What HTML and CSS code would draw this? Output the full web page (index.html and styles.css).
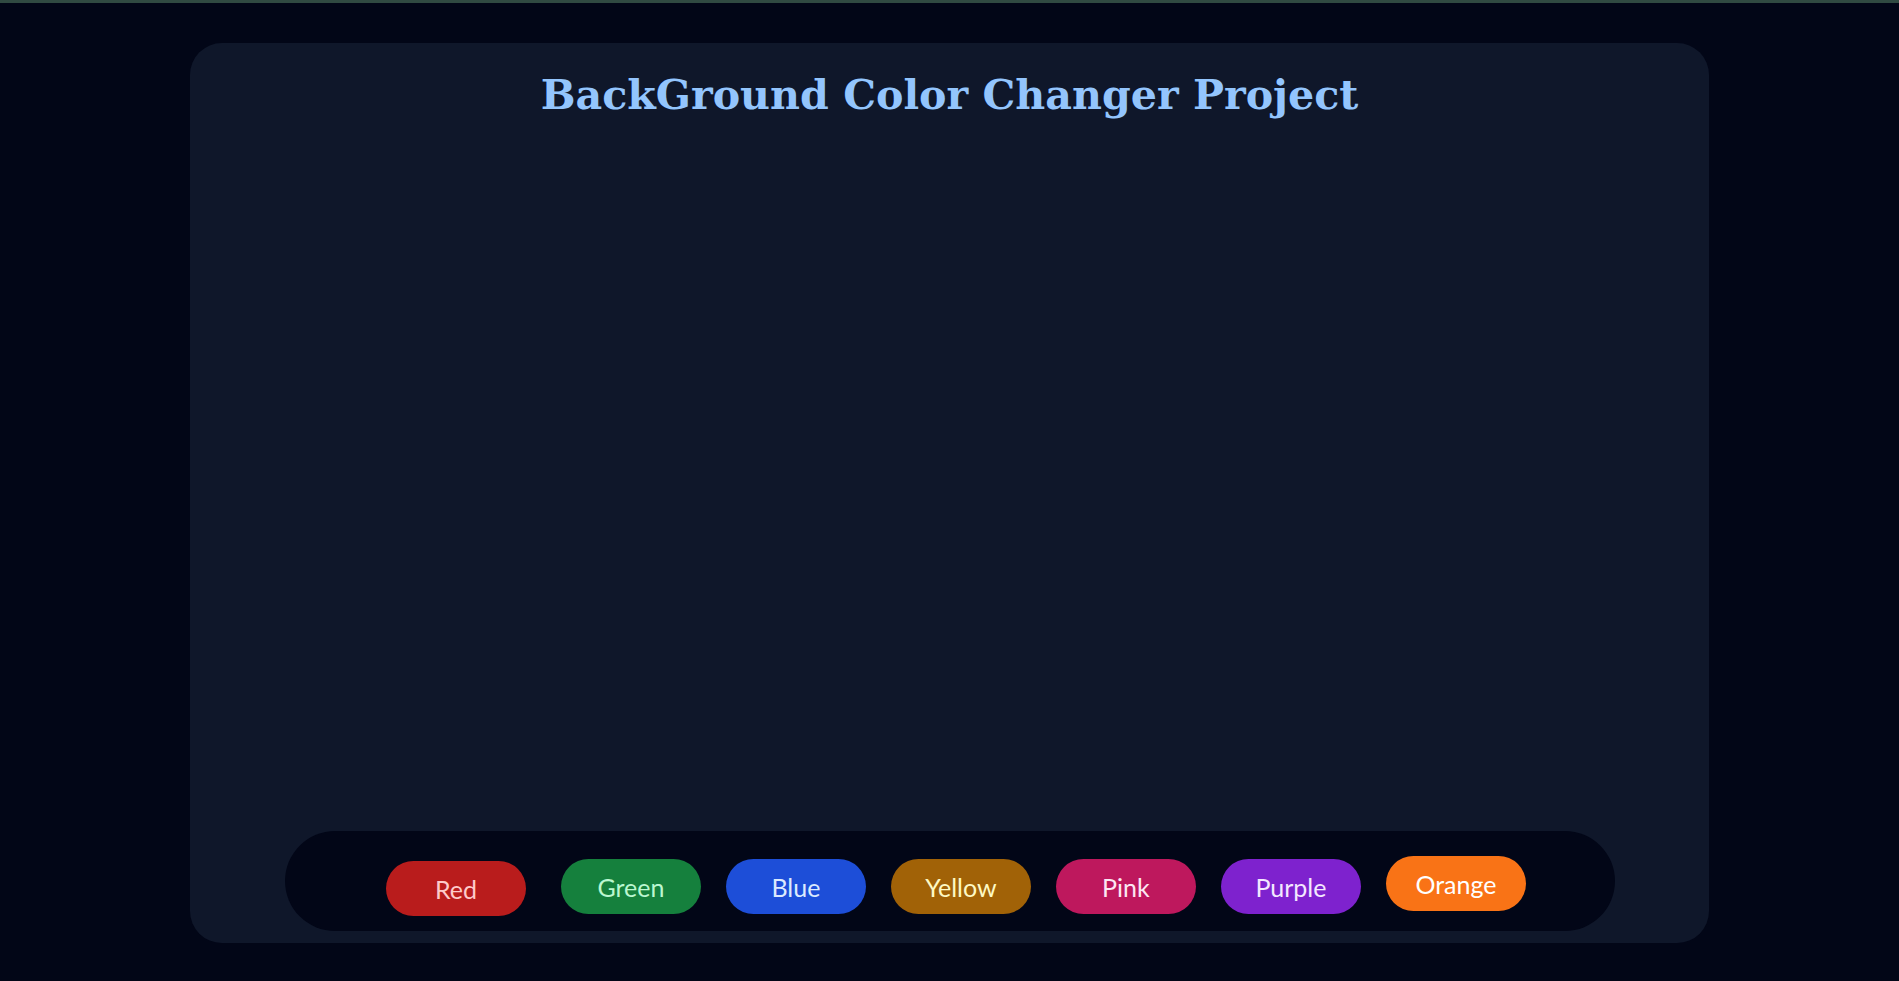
FILE: index.html
```html
<!DOCTYPE html>
<html lang="en">
<head>
<meta charset="utf-8">
<title>BackGround Color Changer Project</title>
<link rel="stylesheet" href="styles.css">
</head>
<body>
<div class="topline"></div>
<main class="card">
  <h1 class="title">BackGround Color Changer Project</h1>
  <div class="spacer"></div>
  <div class="bar">
    <button class="btn btn-red">Red</button>
    <button class="btn btn-green">Green</button>
    <button class="btn btn-blue">Blue</button>
    <button class="btn btn-yellow">Yellow</button>
    <button class="btn btn-pink">Pink</button>
    <button class="btn btn-purple">Purple</button>
    <button class="btn btn-orange">Orange</button>
  </div>
</main>
</body>
</html>
```
FILE: styles.css
```css
html, body {
  margin: 0;
  padding: 0;
}
body {
  background: #020617;
  height: 981px;
  overflow: hidden;
}
.topline {
  height: 3px;
  background: #304a42;
}
.card {
  width: 80%;
  height: 900px;
  margin: 40px auto 0;
  background: #0f172a;
  border-radius: 32px;
  display: flex;
  flex-direction: column;
}
.title {
  margin: 27px 0 0;
  text-align: center;
  font-family: "DejaVu Serif", serif;
  font-weight: bold;
  font-size: 41.2px;
  color: #93c5fd;
}
.spacer {
  flex: 1;
}
.bar {
  margin: 0 94px 12px 95px;
  height: 100px;
  box-sizing: border-box;
  background: #020617;
  border-radius: 50px;
  display: flex;
  align-items: flex-start;
  gap: 25px;
  padding: 28px 0 0 101px;
}
.btn {
  width: 140px;
  height: 55px;
  border: none;
  border-radius: 28px;
  padding: 2px 0 0;
  box-sizing: border-box;
  font-family: Lato, "Noto Sans", sans-serif;
  font-size: 25px;
  line-height: 53px;
  cursor: pointer;
}
.btn-red { background: #b91c1c; color: #fecaca; margin-top: 2px; margin-right: 10px; }
.btn-green { background: #15803d; color: #bbf7d0; }
.btn-blue { background: #1d4ed8; color: #dbeafe; }
.btn-yellow { background: #a16207; color: #fef9c3; }
.btn-pink { background: #be185d; color: #fce7f3; }
.btn-purple { background: #7e22ce; color: #f3e8ff; }
.btn-orange { background: #f97316; color: #ffffff; margin-top: -3px; }
```
